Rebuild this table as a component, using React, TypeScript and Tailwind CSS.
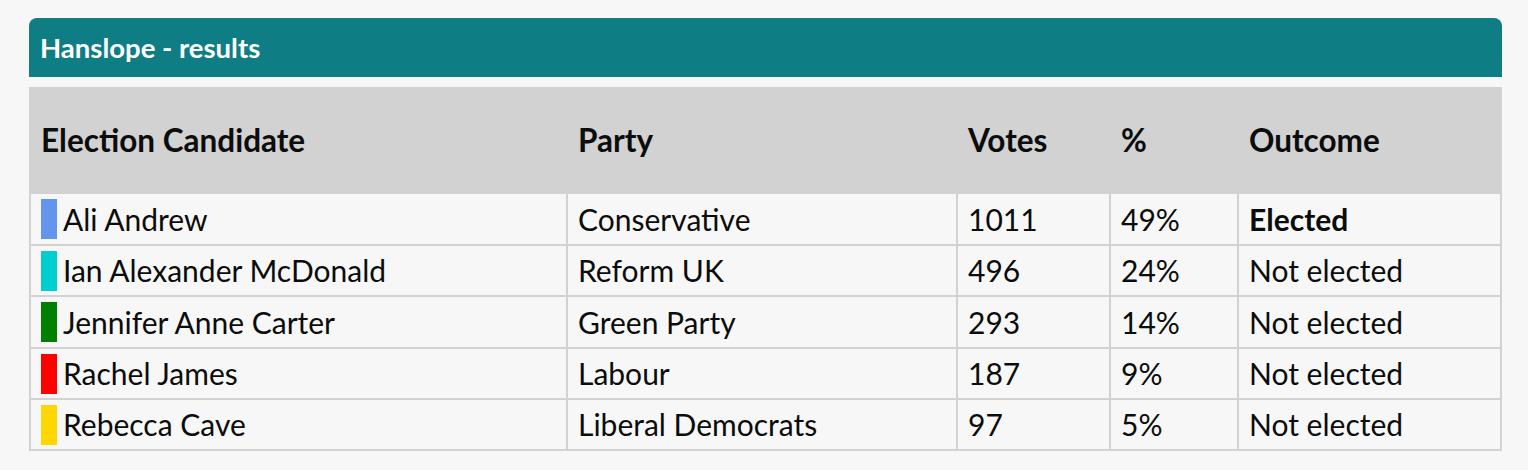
import React from "react";

const rows = [
  { name: "Ali Andrew", color: "bg-[#6495ed]", party: "Conservative", votes: "1011", pct: "49%", outcome: "Elected", bold: true, h: "h-[50px]" },
  { name: "Ian Alexander McDonald", color: "bg-[#00ced1]", party: "Reform UK", votes: "496", pct: "24%", outcome: "Not elected", bold: false, h: "h-[49px]" },
  { name: "Jennifer Anne Carter", color: "bg-[#008000]", party: "Green Party", votes: "293", pct: "14%", outcome: "Not elected", bold: false, h: "h-[50px]" },
  { name: "Rachel James", color: "bg-[#ff0000]", party: "Labour", votes: "187", pct: "9%", outcome: "Not elected", bold: false, h: "h-[49px]" },
  { name: "Rebecca Cave", color: "bg-[#ffd700]", party: "Liberal Democrats", votes: "97", pct: "5%", outcome: "Not elected", bold: false, h: "h-[49px]" },
];

const cols = "grid grid-cols-[535px_390px_153px_128px_263px]";

export default function App() {
  return (
    <div
      className="w-[1528px] h-[470px] bg-[#f7f7f7] pt-[18px] pl-[29px] text-[#0b0c0c]"
      style={{ fontFamily: "Lato, 'Open Sans', sans-serif" }}
    >
      <div className="w-[1473px]">
        <div className="h-[59px] bg-[#0f7e84] rounded-t-[8px] flex items-center pl-[11px] text-white font-bold text-[27.5px]">
          Hanslope - results
        </div>
        <div className="mt-[10px] border-2 border-[#d2d2d2]">
          <div className={`${cols} h-[103px] bg-[#d1d2d1] font-bold text-[31.5px]`}>
            <div className="flex items-center pl-[10px]">Election Candidate</div>
            <div className="flex items-center pl-[12px]">Party</div>
            <div className="flex items-center pl-[12px]">Votes</div>
            <div className="flex items-center pl-[12px]">%</div>
            <div className="flex items-center pl-[12px]">Outcome</div>
          </div>
          {rows.map((r) => (
            <div key={r.name} className={`${cols} ${r.h} box-content border-t-2 border-[#d2d2d2] text-[30px]`}>
              <div className="flex items-center pl-[10px] gap-[6px]">
                <span className={`w-[16px] h-[40px] ${r.color}`} />
                <span>{r.name}</span>
              </div>
              <div className="flex items-center pl-[10px] border-l-2 border-[#d2d2d2]">{r.party}</div>
              <div className="flex items-center pl-[10px] border-l-2 border-[#d2d2d2]">{r.votes}</div>
              <div className="flex items-center pl-[10px] border-l-2 border-[#d2d2d2]">{r.pct}</div>
              <div className={`flex items-center pl-[10px] border-l-2 border-[#d2d2d2] ${r.bold ? "font-bold" : ""}`}>
                {r.outcome}
              </div>
            </div>
          ))}
        </div>
      </div>
    </div>
  );
}
